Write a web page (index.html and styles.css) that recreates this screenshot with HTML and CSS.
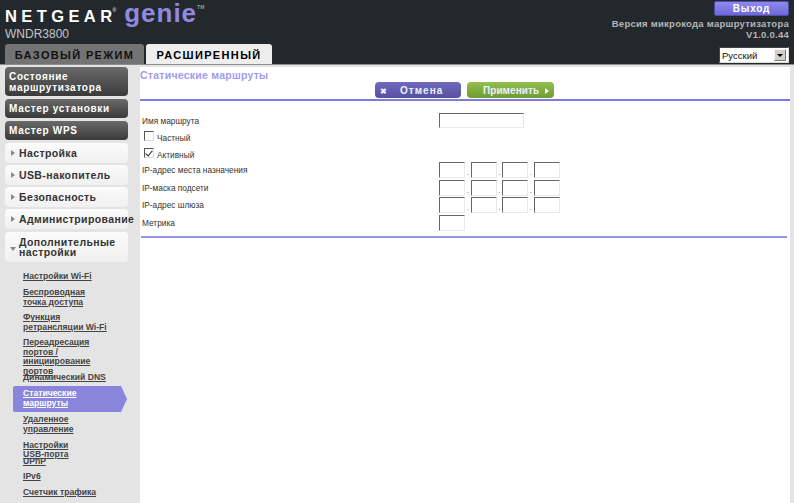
FILE: index.html
```html
<!DOCTYPE html>
<html lang="ru">
<head>
    <meta charset="UTF-8">
    <title>Статические маршруты</title>
    <link rel="stylesheet" href="styles.css">
</head>
<body>
    <header class="top">
        <div class="top-left">
            <div class="logo"><span class="logo-netgear">NETGEAR</span><sup class="logo-reg">®</sup><span class="logo-genie">genie</span><sup class="logo-tm">TM</sup></div>
            <div class="model">WNDR3800</div>
            <div class="tabs">
                <div class="tab">БАЗОВЫЙ РЕЖИМ</div>
                <div class="tab tab-active">РАСШИРЕННЫЙ</div>
            </div>
        </div>
        <div class="top-right">
            <button class="logout" type="button">Выход</button>
            <div class="version">Версия микрокода маршрутизатора<br>V1.0.0.44</div>
            <div class="lang">
                <span class="lang-value">Русский</span>
                <span class="lang-arrow"></span>
            </div>
        </div>
    </header>

    <div class="page">
        <!-- Left menu -->
        <nav class="side">
            <a class="btn-dark">Состояние маршрутизатора</a>
            <a class="btn-dark btn-one">Мастер установки</a>
            <a class="btn-dark btn-one">Мастер WPS</a>
            <a class="btn-light"><i class="arrow"></i>Настройка</a>
            <a class="btn-light"><i class="arrow"></i>USB-накопитель</a>
            <a class="btn-light"><i class="arrow"></i>Безопасность</a>
            <a class="btn-light"><i class="arrow"></i>Администрирование</a>
            <a class="btn-light btn-open"><i class="arrow arrow-down"></i><span>Дополнительные настройки</span></a>
            <ul class="sub">
                <li class="h1"><a>Настройки Wi-Fi</a></li>
                <li class="h2"><a>Беспроводная<br>точка доступа</a></li>
                <li class="h2"><a>Функция<br>ретрансляции Wi-Fi</a></li>
                <li class="h3"><a>Переадресация<br>портов /<br>инициирование<br>портов</a></li>
                <li class="tight"><a>Динамический DNS</a></li>
                <li class="current"><a>Статические<br>маршруты</a></li>
                <li class="h2b"><a>Удаленное<br>управление</a></li>
                <li class="h4"><a>Настройки<br>USB-порта</a></li>
                <li class="tight2"><a>UPnP</a></li>
                <li class="h1"><a>IPv6</a></li>
                <li class="h1"><a>Счетчик трафика</a></li>
            </ul>
        </nav>

        <main class="content">
            <h1 class="title">Статические маршруты</h1>
            <div class="actions">
                <button class="act act-cancel" type="button"><b class="x">✖</b>Отмена</button>
                <button class="act act-apply" type="button">Применить<i class="play"></i></button>
            </div>
            <form class="form">
                <div class="row row-name">
                    <label>Имя маршрута</label>
                    <input class="inp inp-name" type="text">
                </div>
                <label class="check check-first"><input type="checkbox">Частный</label>
                <label class="check"><input type="checkbox" checked>Активный</label>
                <div class="row row-first">
                    <label>IP-адрес места назначения</label>
                    <div class="ip"><input class="inp" type="text"><span>.</span><input class="inp" type="text"><span>.</span><input class="inp" type="text"><span>.</span><input class="inp" type="text"></div>
                </div>
                <div class="row">
                    <label>IP-маска подсети</label>
                    <div class="ip"><input class="inp" type="text"><span>.</span><input class="inp" type="text"><span>.</span><input class="inp" type="text"><span>.</span><input class="inp" type="text"></div>
                </div>
                <div class="row">
                    <label>IP-адрес шлюза</label>
                    <div class="ip"><input class="inp" type="text"><span>.</span><input class="inp" type="text"><span>.</span><input class="inp" type="text"><span>.</span><input class="inp" type="text"></div>
                </div>
                <div class="row">
                    <label>Метрика</label>
                    <input class="inp" type="text">
                </div>
            </form>
            <div class="rule-bottom"></div>
        </main>
    </div>
</body>
</html>
```

FILE: styles.css
```css
* {
    box-sizing: border-box;
}
html, body {
    margin: 0;
    height: 503px;
    overflow: hidden;
}
body {
    font-family: "Liberation Sans", Arial, sans-serif;
    background: #e4e4e4;
    color: #222;
}

/* header */
.top {
    display: flex;
    justify-content: space-between;
    height: 65px;
    background: #23282c;
    border-bottom: 1px solid #8c8c8c;
}
.top-left {
    padding: 1px 0 0 5px;
}
.logo {
    display: flex;
    align-items: baseline;
    height: 26px;
    color: #fff;
    white-space: nowrap;
    line-height: 24px;
}
.logo-netgear {
    font-size: 16.5px;
    font-weight: bold;
    letter-spacing: 4.4px;
}
.logo-reg {
    font-size: 5px;
    line-height: 0;
    margin-left: -4px;
    position: relative;
    top: -10px;
}
.logo-genie {
    margin-left: 8px;
    font-size: 26px;
    font-weight: bold;
    letter-spacing: 1px;
    color: #8f8ae0;
}
.logo-tm {
    font-size: 5px;
    font-weight: bold;
    color: #9a9a9a;
    line-height: 0;
    position: relative;
    top: -13px;
}
.model {
    height: 16px;
    font-size: 12px;
    line-height: 15px;
    color: #c6c6c6;
}
.tabs {
    display: flex;
    gap: 2px;
    margin-top: 1px;
}
.tab {
    height: 20px;
    width: 139px;
    background: #737373;
    border-radius: 3px 3px 0 0;
    color: #111;
    font-size: 11px;
    font-weight: bold;
    letter-spacing: 1.35px;
    line-height: 22px;
    text-align: center;
}
.tab-active {
    width: 126px;
    background: #eeeeee;
    color: #000;
}
.top-right {
    display: flex;
    flex-direction: column;
    align-items: flex-end;
    padding: 1px 5px 0 0;
}
.logout {
    display: block;
    width: 75px;
    height: 15px;
    padding: 0;
    border: 1px solid #4f4ba8;
    border-radius: 2px;
    background: linear-gradient(#8f8bec, #6d68d6);
    color: #fff;
    font-family: inherit;
    font-size: 10px;
    font-weight: bold;
    letter-spacing: .8px;
}
.version {
    margin-top: 2px;
    color: #b4b4b4;
    font-size: 9.5px;
    font-weight: bold;
    letter-spacing: .25px;
    line-height: 11px;
    text-align: right;
}
.lang {
    display: flex;
    justify-content: space-between;
    align-items: center;
    width: 70px;
    height: 16px;
    margin-top: 7px;
    padding: 0 2px 0 2px;
    background: #fff;
    border: 1px solid #444;
    border-right-color: #ddd;
    border-bottom-color: #ddd;
    color: #111;
    font-size: 9.5px;
}
.lang-arrow {
    position: relative;
    width: 12px;
    height: 12px;
    background: #d4d0c8;
    border: 1px solid #777;
    border-top-color: #f4f4f4;
    border-left-color: #f4f4f4;
}
.lang-arrow::after {
    content: "";
    position: absolute;
    left: 2px;
    top: 4px;
    border: 3px solid transparent;
    border-top-color: #000;
}

/* page */
.page {
    display: flex;
    height: 438px;
}
.side {
    flex: 0 0 140px;
    padding: 2px 0 0 5px;
}
.btn-dark {
    display: block;
    width: 123px;
    height: 29px;
    margin-bottom: 3px;
    padding: 4px 0 0 4px;
    background: linear-gradient(#6a6a6a, #3a3a3a);
    border-radius: 4px;
    color: #fff;
    font-size: 10px;
    font-weight: bold;
    letter-spacing: .7px;
    line-height: 11px;
}
.btn-one {
    height: 19px;
    line-height: 13px;
    padding-top: 3px;
}
.btn-one + .btn-light {
    margin-top: 3px;
}
.btn-light {
    display: flex;
    align-items: center;
    width: 123px;
    height: 20px;
    margin-bottom: 2px;
    padding-left: 6px;
    background: linear-gradient(#fbfbfb, #f0f0f0);
    border-radius: 4px;
    color: #333;
    font-size: 10.5px;
    font-weight: bold;
    letter-spacing: .38px;
    white-space: nowrap;
}
.btn-open {
    height: 30px;
    margin-top: 3px;
    white-space: normal;
    line-height: 10px;
}
.arrow {
    flex: none;
    width: 0;
    height: 0;
    margin-right: 4px;
    border: 3px solid transparent;
    border-left: 4px solid #888;
    border-right: 0;
}
.arrow-down {
    margin: 3px 3px 0 -1px;
    border: 3px solid transparent;
    border-top: 4px solid #888;
    border-bottom: 0;
}

/* sub menu */
.sub {
    list-style: none;
    margin: 0;
    padding: 8px 0 0;
    font-size: 8.6px;
    font-weight: bold;
    line-height: 9.5px;
    color: #444;
}
.sub a {
    text-decoration: underline;
}
.sub li {
    padding-left: 18px;
}
.h1 { height: 16px; }
.h2 { height: 25px; }
.h2b { height: 25.5px; }
.h3 { height: 35px; }
.h4 { height: 16.5px; }
.tight { height: 13px; }
.tight2 { height: 15px; }
.sub .current {
    width: 114px;
    height: 26px;
    margin: 0 0 3px 8px;
    padding: 3px 0 0 10px;
    background: #8a85dc;
    clip-path: polygon(0 0, 108px 0, 100% 50%, 108px 100%, 0 100%);
    border-radius: 2px;
    color: #fff;
}

/* main */
.content {
    flex: 0 0 650px;
    height: 436px;
    margin-top: 2px;
    padding: 2px 0 0 0;
    background: #fff;
}
.title {
    margin: 0;
    height: 13px;
    font-size: 10.5px;
    font-weight: bold;
    letter-spacing: .25px;
    line-height: 13px;
    color: #a09bf0;
}
.actions {
    display: flex;
    gap: 6px;
    height: 19px;
    padding-left: 235px;
    border-bottom: 2px solid #7f7ae0;
}
.act {
    display: block;
    height: 16px;
    width: 86px;
    padding: 0;
    border: 0;
    border-radius: 4px;
    color: #eef;
    font-family: inherit;
    font-size: 10px;
    font-weight: bold;
    text-align: left;
}
.act-cancel {
    padding-left: 5px;
    background: linear-gradient(#6f6abf, #55509f);
    letter-spacing: 1px;
}
.act-apply {
    width: 87px;
    padding-left: 16px;
    background: linear-gradient(#92bf4e, #6f9c32);
    letter-spacing: .05px;
}
.x {
    display: inline-block;
    width: 20px;
    font-size: 8px;
}
.play {
    display: inline-block;
    margin-left: 6px;
    border: 3px solid transparent;
    border-left: 4px solid #fff;
    border-right: 0;
}
.form {
    padding: 12px 0 0 2px;
    font-size: 8.3px;
    color: #333;
}
.row {
    display: flex;
    align-items: center;
    height: 17.5px;
}
.row > label {
    flex: 0 0 297px;
}
.row-name {
    height: 15px;
}
.row-first {
    margin-top: -1.75px;
}
.check {
    display: flex;
    align-items: center;
    height: 17px;
    padding-left: 2px;
}
.check-first {
    margin-top: 1px;
}
.check input {
    appearance: none;
    position: relative;
    width: 10px;
    height: 10px;
    margin: -4px 3px 0 0;
    background: #fff;
    border: 1px solid #ddd;
    border-top-color: #555;
    border-left-color: #555;
}
.check input:checked::after {
    content: "";
    position: absolute;
    left: 2px;
    top: 0;
    width: 3px;
    height: 6px;
    border: solid #222;
    border-width: 0 1.5px 1.5px 0;
    transform: rotate(40deg);
}
.inp {
    display: block;
    width: 26px;
    height: 16px;
    padding: 0;
    background: #fff;
    border: 1px solid #eaeae4;
    border-top-color: #666;
    border-left-color: #666;
}
.inp-name {
    width: 85px;
    height: 15px;
}
.ip {
    display: flex;
    align-items: center;
}
.ip span {
    width: 5.5px;
    text-align: center;
    font-size: 8px;
    padding-top: 5px;
    color: #666;
}
.rule-bottom {
    width: 646px;
    height: 2px;
    margin: 5px 0 0 1px;
    background: #9a95e6;
}
```
